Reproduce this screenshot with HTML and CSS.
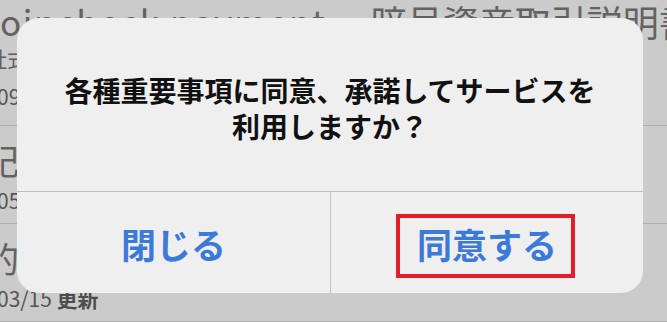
FILE: index.html
```html
<!DOCTYPE html>
<html lang="ja">
<head>
<meta charset="utf-8">
<title>同意確認</title>
<link rel="stylesheet" href="styles.css">
</head>
<body>
<div class="screen">
  <ul class="list">
    <li class="row row-first">
      <div class="title title-latin"><span class="latin">Coincheck payment</span><span class="jp">暗号資産取引説明書</span></div>
      <div class="sub">社式会社コインチェック</div>
      <div class="date">09/30 更新</div>
    </li>
    <li class="row">
      <div class="title">記載事項</div>
      <div class="date">05/12 更新</div>
    </li>
    <li class="row">
      <div class="title">的確性</div>
      <div class="date">03/15 <b>更新</b></div>
    </li>
  </ul>

  <div class="alert" role="alertdialog">
    <div class="msg">各種重要事項に同意、承諾してサービスを<br>利用しますか？</div>
    <div class="actions">
      <button class="action">閉じる</button>
      <button class="action">同意する</button>
    </div>
    <div class="mark"></div>
  </div>
</div>
</body>
</html>
```
FILE: styles.css
```css
* { box-sizing: border-box; }
html, body {
  margin: 0;
  padding: 0;
}
body {
  width: 667px;
  height: 322px;
  overflow: hidden;
  background: #cbcbcb;
  font-family: "Noto Sans CJK JP", "Noto Sans", sans-serif;
}
.screen {
  position: relative;
  width: 667px;
  height: 322px;
  overflow: hidden;
}
.list {
  list-style: none;
  margin: 0;
  padding: 0;
}
.row {
  height: 98px;
  border-bottom: 1px solid #adadad;
  padding-top: 14px;
  color: #5e5e5e;
  white-space: nowrap;
}
.row-first {
  height: 125px;
  padding-top: 0;
}
.title {
  font-size: 35px;
  line-height: 40px;
  font-weight: 400;
  margin-left: -16px;
  color: #626262;
}
.title-latin {
  display: flex;
  margin-left: -24px;
  margin-top: 1px;
}
.title-latin .latin {
  letter-spacing: 1.6px;
}
.title-latin .jp {
  margin-left: 44px;
  font-size: 36px;
  letter-spacing: 0;
}
.sub {
  font-size: 21px;
  line-height: 26px;
  margin-top: 4px;
  margin-left: -14px;
}
.date {
  font-size: 21px;
  line-height: 26px;
  margin-left: -3px;
  margin-top: 7px;
  color: #555;
}
.row-first .date { margin-top: 12px; }
.date b { font-weight: 700; color: #4d4d4d; }

.alert {
  position: absolute;
  left: 17px;
  top: 18px;
  width: 626px;
  height: 275px;
  border-radius: 22px;
  background: #efefef;
  display: flex;
  flex-direction: column;
  overflow: hidden;
}
.msg {
  height: 174px;
  padding: 54px 40px 0;
  text-align: center;
  font-size: 28px;
  line-height: 36px;
  font-weight: 700;
  color: #111;
  border-bottom: 1px solid #bcbcbc;
}
.actions {
  flex: 1;
  display: grid;
  grid-template-columns: 313px 1fr;
}
.action {
  border: 0;
  margin: 0;
  padding: 0;
  background: transparent;
  font-family: "Noto Sans CJK JP", "Noto Sans", sans-serif;
  font-size: 35px;
  font-weight: 700;
  color: #3b7ad9;
  display: flex;
  align-items: center;
  justify-content: center;
  padding-top: 2px;
}
.action + .action {
  border-left: 1px solid #c2c2c2;
}
.mark {
  position: absolute;
  left: 379px;
  top: 196px;
  width: 179px;
  height: 64px;
  border: 4px solid #e41e26;
}
```
